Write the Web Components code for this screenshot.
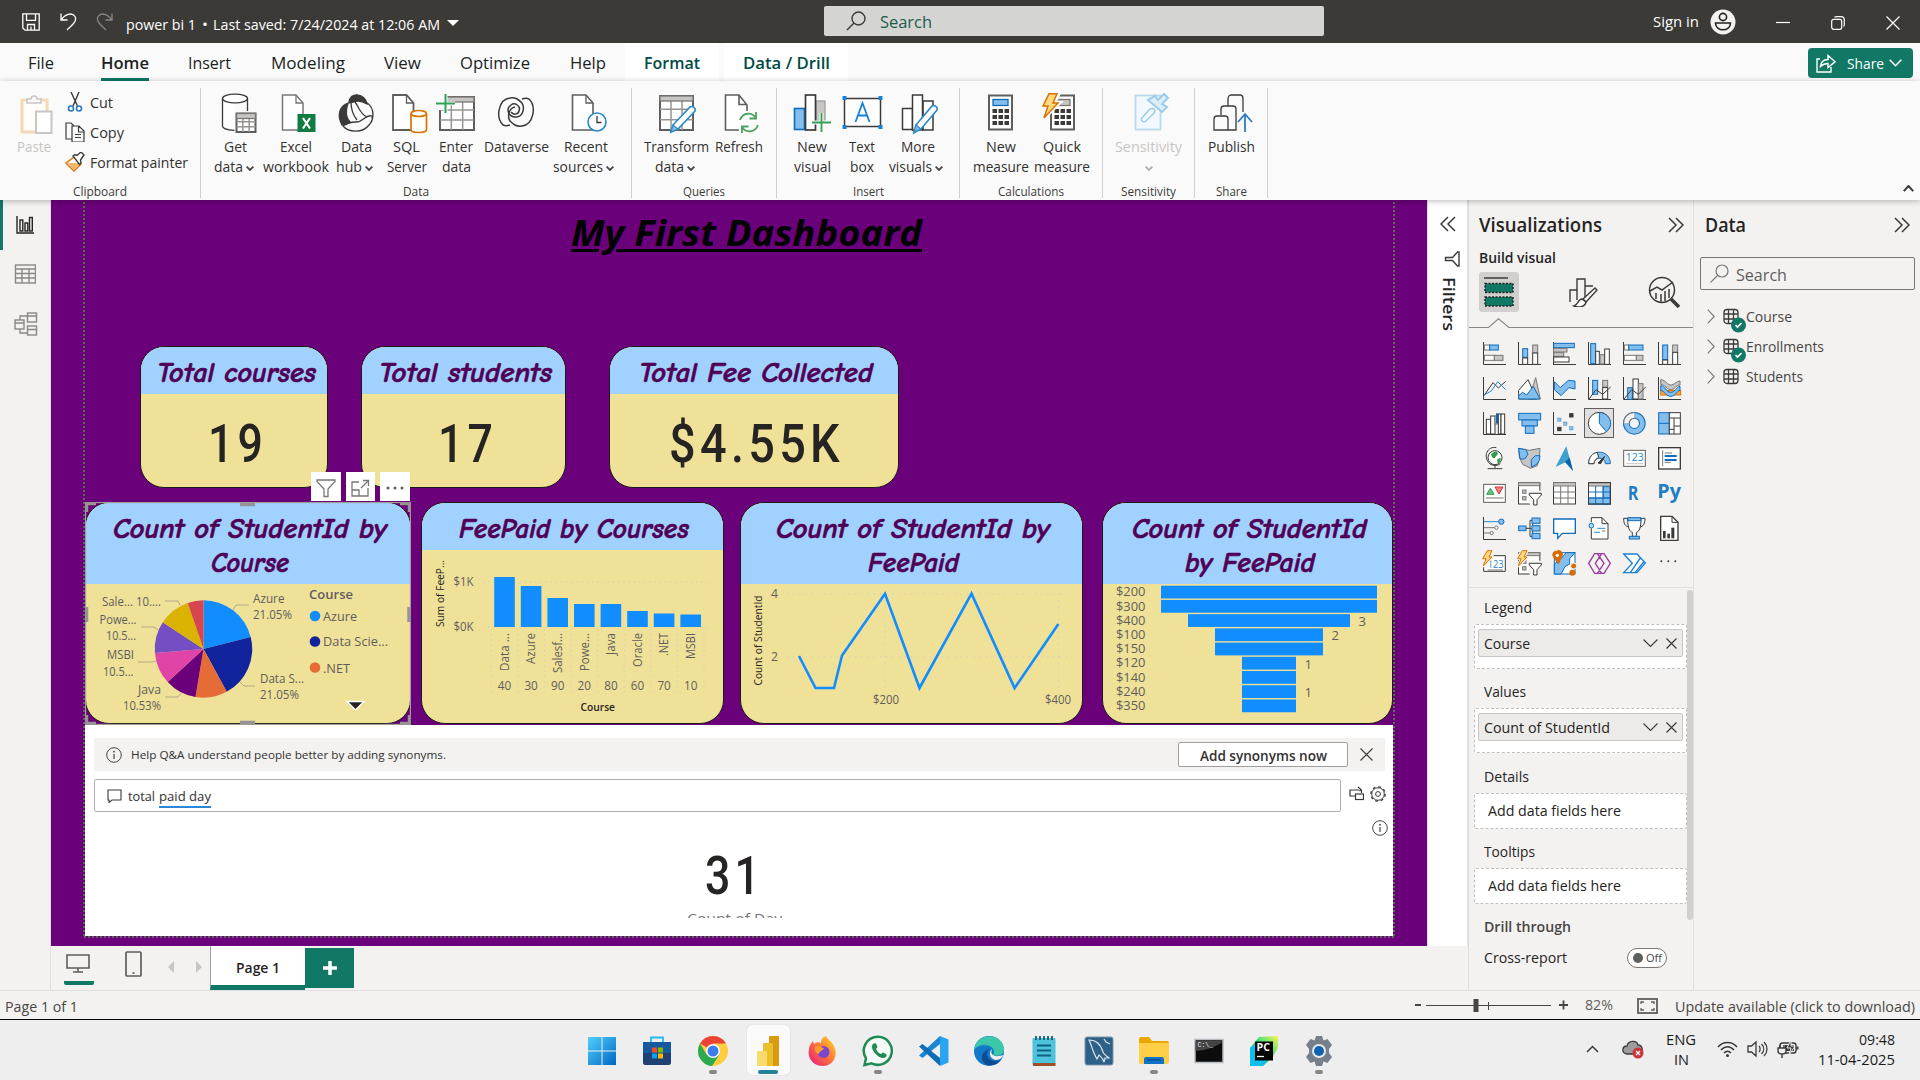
<!DOCTYPE html>
<html lang="en">
<head>
<meta charset="utf-8">
<title>power bi 1</title>
<style>
html,body{margin:0;padding:0}
body{width:1920px;height:1080px;overflow:hidden;display:flex;flex-direction:column;font-family:"Segoe UI","Open Sans","Noto Sans",sans-serif;font-size:14px;color:#252423;background:#f3f2f1}
main{display:flex;height:790px;flex:none}
.mid{display:flex;flex-direction:column;width:1417px}
.top{display:flex;height:746px}
</style>
</head>
<body>
<title-bar></title-bar>
<ribbon-tabs></ribbon-tabs>
<ribbon-bar></ribbon-bar>
<main>
  <nav-rail></nav-rail>
  <div class="mid">
    <div class="top"><report-canvas></report-canvas><filters-pane></filters-pane></div>
    <page-tabs></page-tabs>
  </div>
  <viz-pane></viz-pane>
  <data-pane></data-pane>
</main>
<status-bar></status-bar>
<task-bar></task-bar>
<script>
const K='#3b3a39',B='#0f6cbd',L='#83beec',G='#797775',H='#c8c6c4',W='#fff';
const r=(x,y,w,h,f='none',s=K,sw)=>`<rect x="${x}" y="${y}" width="${w}" height="${h}" fill="${f}" stroke="${s}"${sw?` stroke-width="${sw}"`:''}/>`;
const p=(d,s=K,f='none',sw)=>`<path d="${d}" fill="${f}" stroke="${s}"${sw?` stroke-width="${sw}"`:''}/>`;
const c=(x,y,q,f='none',s=K,sw)=>`<circle cx="${x}" cy="${y}" r="${q}" fill="${f}" stroke="${s}"${sw?` stroke-width="${sw}"`:''}/>`;
const svg=(w,h,vb,body,sw=1.3,st='')=>`<svg width="${w}" height="${h}" viewBox="${vb}" fill="none" stroke-width="${sw}" style="display:block;flex:none;${st}">${body}</svg>`;
const t=(s,w,st='')=>`<fit-text w="${w}" style="${st}">${s}</fit-text>`;
const define=(name,css,html)=>customElements.define(name,class extends HTMLElement{
  connectedCallback(){ if(this.shadowRoot) return;
    const root=this.attachShadow({mode:'open'});
    root.innerHTML=`<style>*{box-sizing:border-box}:host{display:block;box-sizing:border-box;flex:none}${css}</style>`+(typeof html==='function'?html(this):html);
  }});
const a=(e,n,d='')=>e.getAttribute(n)??d;

/* text set to a fixed measure */
const fits=new Set();
customElements.define('fit-text',class extends HTMLElement{
  connectedCallback(){
    if(!this.shadowRoot){
      this.attachShadow({mode:'open'}).innerHTML=`<style>:host{display:block;flex:none;white-space:nowrap}span{display:inline-block;transform-origin:0 50%}</style><span><slot></slot></span>`;
      fits.add(this);
    }
    this.fit();
  }
  fit(){
    const w=+this.getAttribute('w'),s=this.shadowRoot.querySelector('span');
    this.style.width=w+'px';
    s.style.transform='';
    if(s.offsetWidth)s.style.transform=`scaleX(${w/s.getBoundingClientRect().width})`;
  }
});

/* ---------- title bar ---------- */
define('title-bar',`:host{height:43px;background:#3b3a37;color:#fff;display:flex;align-items:center}
.q{margin-left:365px;width:500px;height:30px;background:#d4d4d2;border-radius:2px;display:flex;align-items:center;color:#1e5c4f;padding-left:22px;margin-top:-1px}`,
svg(18,18,'0 0 18 18',p('M.8.8h16.4v16.4H3L.8 15zM4.5.8v6.5h9V.8M5.5 17v-5.5h7V17M9 13.5V17','#fff'),1.3,'margin-left:22px')+
svg(17,19,'0 0 17 19',p('M1 1.500v6.500h6.500M1.300 7.800C5 2 12 0 15 4.500 17.500 9 12 13 7 18','#fff'),1.3,'margin-left:20px')+
svg(17,19,'0 0 17 19',p('M16 1.500v6.500H9.500M15.700 7.800C12 2 5 0 2 4.500-.5 9 5 13 10 18','#8a8886'),1.3,'margin-left:19px')+
t('power bi 1',70,'margin-left:13px;margin-top:6px;font-size:14.500px')+t('•',6,'margin-left:5.500px;margin-top:6px;font-size:14.500px')+
t('Last saved: 7/24/2024 at 12:06 AM',227,'margin-left:5.500px;margin-top:6px;font-size:14.500px')+
svg(12,6,'0 0 12 6',p('M0 0h12L6 6z','none','#fff'),1,'margin-left:7px;margin-top:2px')+
`<div class="q">${svg(20,20,'0 0 20 20',c(12.5,7.5,6.5)+p('M8 12L1 19'),1.4)}${t('Search',52,'margin-left:14px;font-size:16.500px')}</div>`+
t('Sign in',46,'margin-left:329px;font-size:14.500px;margin-top:-1px')+
svg(26,26,'0 0 26 26',c(13,13,12.5,'#f3f2f1','none')+c(13,8,3.6,'none','#222',1.6)+p('M5.500 14h15c0 9-15 9-15 0z','#222','none',1.6),1,'margin-left:11px')+
svg(14,14,'0 0 14 14',p('M0 7.500h14','#fff'),1.2,'margin-left:40px')+
svg(14,14,'0 0 14 14',`<rect x=".7" y="3.300" width="10" height="10" rx="2" stroke="#fff"/><path d="M3.500 1.200C4 .8 5 .7 6 .7h4c2 0 3.300 1.300 3.300 3.300v4c0 1-.2 2-.7 2.500" stroke="#fff"/>`,1.2,'margin-left:41px;margin-top:3px')+
svg(14,14,'0 0 14 14',p('M.5.5l13 13M13.500.5l-13 13','#fff'),1.2,'margin-left:41px;margin-top:3px'));

/* ---------- ribbon ---------- */
define('ribbon-tabs',`:host{height:38px;background:#fafafa;display:flex;align-items:stretch;font-size:16px;color:#201f1e;line-height:40px}
.on{font-weight:600;border-bottom:3px solid #117865;line-height:40px;height:38px}
.ctx{background:#fff;font-weight:600;color:#004b45;display:flex;justify-content:center}
.share{margin:5px 7px 3px 960px;width:105px;height:30px;background:#117865;border-radius:4px;color:#fff;display:flex;align-items:center;line-height:28px}`,
t('File',26,'margin-left:28px')+`<div class="on" style="margin-left:47px">${t('Home',48)}</div>`+t('Insert',43,'margin-left:39px')+t('Modeling',74,'margin-left:40px')+t('View',37,'margin-left:39px')+t('Optimize',70,'margin-left:39px')+t('Help',36,'margin-left:40px')+
`<div class="ctx" style="width:94px;margin-left:19px">${t('Format',56)}</div><div class="ctx" style="width:124px;margin-left:5px">${t('Data / Drill',87)}</div>
<div class="share">${svg(20,19,'0 0 20 19',p('M4 5H1v13h14v-5M4.500 12.500C5 7.500 8 5.500 12 5.500V1.500l7 6.300-7 5.700V9.500c-3.500 0-5.500 1-7.500 3z','#fff'),1.4,'margin-left:8px')}${t('Share',37,'margin-left:11px;font-size:15px')}${svg(13,8,'0 0 13 8',p('M.7.7l5.800 6 5.800-6','#fff'),1.6,'margin-left:5px')}</div>`);

const doc='M3.500 1H17l7 8v27H3.500z',fold='M17 1v8h7';
const gridI=(x,y,w,h)=>r(x,y,w,h,W,'#605e5c',2)+p(`M${x} ${y+h/3+2}h${w}M${x} ${y+h*2/3+1}h${w}M${x+w/3} ${y+5}v${h-5}M${x+w*2/3} ${y+5}v${h-5}`,'#979593','none',1.5)+r(x,y,w,5,H,'#797775',1.3);
const sh=(x,y,b)=>`<g transform="translate(${x} ${y})">${b}</g>`;
const RI={
paste:sh(5,2,p('M3 5h25v32H3z','#f3d9b5','#fffdf8',3)+p('M8 8V4h4c0-4 6-4 6 0h4v4z','#c8c6c4','#fafafa',1.6)+r(17,16.500,15.500,21.500,'#fff','#c8c6c4',2)),
get:p('M6 5v27c0 3 6 5 13 5V5','none',W)+`<ellipse cx="19" cy="5.500" rx="12.500" ry="4.300" fill="#fff" stroke="${K}"/>`+p('M6.500 5.500V33c0 2 4 4 12 4.300M31.500 5.500V18')+gridI(20.5,20.500,19,18.500),
excel:sh(3,1,p(doc,'#797775','#fff',1.5)+p(fold,'#797775')+r(18.5,20,18,18,'#107c41','none')+p('M24 24l7 10.500M31 24l-7 10.500','#fff','none',2.200)),
hub:sh(0,1,p('M13 9C13 3 18 0 22 1c5 1 8 4 9 9-5-3-9-4-13-2z',K,K)+p('M12 9C3 12 1 22 6 31c4-1 7-1 8-3-4-4-5-10-2-19z',K,K)+p('M18 7c6-3 19 1 19 14 0 3-.5 5-2 7M7 32c6 7 20 7 26-1 3-3 4-6 3-9-7-2-8 6-16 6-5 0-9 1-13 4zM15 8c0 7 2 13 6 18M19 8c4 5 5 12 12 15')),
sql:sh(2.5,1,p(doc,'#605e5c','#fff',1.8)+p(fold,'#605e5c')+p('M21.500 19.500v16c0 4 15.500 4 15.500 0v-16','#d97300','#fff',1.7)+`<ellipse cx="29.250" cy="19.500" rx="7.750" ry="3" fill="#fff" stroke="#d97300" stroke-width="1.700"/>`),
enter:sh(1,1,gridI(3,3,34,33)+r(0,0,9,16,'#fafafa','none')+p('M8.500 0v19M-1 9.500h19','#fafafa','none',4)+p('M8.500 0v19M-1 9.500h19','#31a354','none',2)),
verse:p('M7 32C-1 24 3 6 14 5c6-1 9 2 12 5 3 5 1 13-5 14-8 1-12-8-6-12 4-3 10 1 8 6-1 4-6 4-8 1M33 6c8 8 4 26-7 27-6 1-9-2-12-5-3-5-1-13 5-14M26 6c3-1 5-1 7 0M14 32c-3 1-5 1-7 0',K,'none',1.500),
recent:sh(3,1,p(doc,'#605e5c','#fff',1.6)+p(fold,'#605e5c')+c(28,28,9,'#fff','#2b88c8',1.6)+p('M28 22v6.500h4.500')),
transform:sh(1,0,gridI(2,3,33,34)+p('M15 32l17-18c3-1.500 6 1 5 4L20 36l-7 3z','#2b88c8','#fff',1.600)+p('M15 32l5 4-7 3z','#2b88c8',L,1.2)),
refresh:sh(1,1,p('M5.500 1H19l8 9v27H5.500z','none','#fff')+p('M19 36H5.500V1H19l8 10v6M19 1v9.500h8','#605e5c','none',1.6)+p('M20 26c3-8 12-8 16-2M36 18v6.500h-6.500M38 31c-3 8-12 8-16 2M22 39v-6.500h6.500','#4da061','none',1.8)),
newv:r(2.5,15.500,10,21,L,B,1.6)+r(24,8,9,20,H,'#a19f9d')+r(13.500,2,10,35,'#fff',K,1.7)+p('M29.500 20v19M20 29.500h19','#fafafa','none',4)+p('M29.500 20v19M20 29.500h19','#31a354','none',1.800),
textb:r(2.5,5.500,36,28,'#fff',K,1.5)+[[2.5,5],[38.5,5],[2.5,34],[38.5,34]].map(q=>r(q[0]-2,q[1]-2,4,4,'#1782d4','none')).join('')+p('M13.500 29l7-19 7 19M16 22.500h9','#1782d4','none',1.800),
more:sh(1,0,r(3.5,15.500,10,21,'#fff',K,1.5)+r(24,8,10,29,'#fff',K,1.5)+r(13.5,2,10,35,'#fff',K,1.5)+p('M17 32l16-19c3-1.500 6 1 5 4L22 36l-7 4z','#2b88c8','#fff',1.600)+p('M17 32l5 4-7 3z','#2b88c8',L,1.2)),
calc:r(8,2.500,23,34,'#fff','#605e5c',2)+r(12,6.500,15,6,L,B)+[16,22,28].map(y=>[11.5,17.5,23.500].map(x=>r(x,y,4.5,4,K,'none')).join('')).join(''),
quick:sh(-1,0,r(10,2.500,23,34,'#fff','#605e5c',2)+r(16,6.500,13,6,H,G)+[16,22,28].map(y=>[13.5,19.500,25.500].map(x=>r(x,y,4.5,4,K,'none')).join('')).join('')+p('M7 0h11l-5 10h5L2 26l4-12H1z','#fafafa','#fafafa',4)+p('M8 .7h8L12 10h5L3 25l4-12H2z','#d97300','#ffd780',1.5)),
sens:sh(1,0,r(5.5,2.500,25,34,'#f2f8fd','#b9d9ee',1.8)+p('M11 26l9-10c4-2 6 2 4 4l-8 8c-3 2-6-1-4-3l6-7','#9ccbea','none',1.5)+p('M18 7l14 12 5-5-5-3 6-6-4-4-6 6-3-4z','#9ccbea','#dceefa',2)),
publish:sh(1,1,p('M2 36V25c0-2 1-3 3-3h8c2 0 3 1 3 3v11zM9 21v-6c0-2 1-3 3-3h9c2 0 3 1 3 3v21H16M16 12V5c0-2 1-4 3-4h9c2 0 3 1 3 4v13')+p('M33 38V20M26 28l7-8 7 8','#2b7cc0','none',1.800)),
};
define('ribbon-button',`:host{display:flex;flex-direction:column;align-items:center;width:var(--w);font-size:14px;line-height:20px;color:#323130}
.l{display:flex;align-items:center;height:20px;gap:3px}.m{margin-left:-4px}.i{height:44px;width:40px}:host([off]){color:#c8c6c4}`,
e=>{const[l1,w1,l2,w2]=a(e,'lines').split('|');const ch=svg(8,5,'0 0 8 5',p('M.6.6L4 4 7.400.6',e.hasAttribute('off')?'#b3b0ad':'#484644'),1.8,'margin-top:3px');
 return `<div class="i">${svg(40,40,'0 0 40 40',RI[a(e,'icon')],1.3,'overflow:visible')}</div><div class="l">${t(l1,w1)}</div><div class="l ${l2&&e.hasAttribute('menu')?'m':''}">${l2?t(l2,w2):''}${e.hasAttribute('menu')?ch:''}</div>`});
define('ribbon-group',`:host{display:flex;flex-direction:column;height:110px;margin-top:7px;border-right:1px solid #d2d0ce;width:var(--w)}
.b{display:flex;height:93px;padding:5px 0 0 var(--p)}.c{display:flex;justify-content:center;font-size:12px;line-height:20px;color:#3b3a39;height:16px;padding-top:1px}`,
e=>`<div class="b"><slot></slot></div><div class="c">${t(a(e,'label'),a(e,'lw'))}</div>`);
const rb=(i,w,l,x='')=>`<ribbon-button icon="${i}" lines="${l}" style="--w:${w}px" ${x}></ribbon-button>`;
const rg=(l,lw,w,pd,x)=>`<ribbon-group label="${l}" lw="${lw}" style="--w:${w}px;--p:${pd}px">${x}</ribbon-group>`;
define('ribbon-bar',`:host{height:119px;background:#fafafa;display:flex;box-shadow:0 1px 6px rgba(0,0,0,.28);position:relative;z-index:2}
.cl{display:flex;flex-direction:column;gap:10px;margin-left:10px;font-size:14px;color:#323130;margin-top:-1px}.cl div{display:flex;height:20px;align-items:center;gap:5px}
.up{margin:104px 0 0 635px}`,
rg('Clipboard',54,201,14,rb('paste',40,'Paste|34','off')+`<div class="cl">
<div>${svg(20,20,'0 0 20 20',p('M6 0l6.500 14M14 0L8 14')+c(6,16.500,2.500,'none','#2b7cc0',1.6)+c(14,16.500,2.500,'none','#2b7cc0',1.6),1.4,'margin-left:1px')}${t('Cut',23)}</div>
<div>${svg(20,20,'0 0 20 20',p('M7 17H1V1h5l3 3')+p('M7 4h7l5 5v11H7zM13.500 4.500V10H19M10 12.500h6M10 15.500h6'),1.2,'margin-left:1px')}${t('Copy',34)}</div>
<div>${svg(20,20,'0 0 20 20',p('M9 5l7 7-7 7L1 11z','#e08020','#fff',1.6)+p('M3 11h12l-6 7z','none','#f5b668')+p('M8 4l2-1.500 2 1 4-3.500 3 3-3.500 5 .5 3-1.500 1.500z',K,'#fff'),1.4,'margin-left:1px')}${t('Format painter',98)}</div></div>`)+
rg('Data',26,431,7,rb('get',55,'Get|23|data|29','menu')+rb('excel',66,'Excel|32|workbook|66')+rb('hub',54,'Data|31|hub|26','menu')+rb('sql',47,'SQL|27|Server|40')+rb('enter',52,'Enter|34|data|29')+rb('verse',68,'Dataverse|65')+rb('recent',71,'Recent|44|sources|50','menu'))+
rg('Queries',42,145,10,rb('transform',69,'Transform|65|data|29','menu')+rb('refresh',56,'Refresh|48'))+
rg('Insert',31,183,13,rb('newv',44,'New|30|visual|37')+rb('textb',56,'Text|26|box|24')+rb('more',56,'More|34|visuals|43','menu'))+
rg('Calculations',66,143,12,rb('calc',58,'New|30|measure|56')+rb('quick',64,'Quick|38|measure|56'))+
rg('Sensitivity',55,92,11,rb('sens',69,'Sensitivity|67','off menu'))+
rg('Share',31,73,12,rb('publish',48,'Publish|47'))+
`<div class="up">${svg(11,7,'0 0 11 7',p('M.8 6.200L5.500 1l4.700 5.200'),2)}</div>`);

/* ---------- left rail ---------- */
define('nav-rail',`:host{width:51px;height:790px;background:#f3f2f1;border-right:1px solid #e1dfdd}
div{height:50px;display:flex;align-items:center;padding-left:14px}.on{border-left:3px solid #117865;padding-left:13px}`,
`<div class="on">${svg(18,18,'0 0 18 18',p('M1 0v17h17','#252423')+r(4,4,2.800,11,'none','#252423')+r(9,7,2.800,8,'none','#252423')+r(13.500,1.500,2.800,13.500,'none','#252423'),1.4)}</div>
<div style="margin-top:-1px">${svg(22,20,'0 0 22 20',r(1.5,1,20,18,'none','#8a8886')+p('M1.500 5h20M1.500 9.500h20M1.500 14h20M8 5v14M15 5v14','#8a8886'),1.4)}</div>
<div style="margin-top:0">${svg(24,24,'0 0 24 24',r(1,8,9,9,'none','#8a8886')+r(13.500,1,9,9,'none','#8a8886')+r(13.500,14,9,9,'none','#8a8886')+p('M1 11h9M13.500 4h9M13.500 17.500h9M6 8V4h7M6 17v4h7','#8a8886'),1.4)}</div>`);

/* ---------- report canvas ---------- */
const T=(x,y,s,w,z,o='')=>`<text x="${x}" y="${y+z*.357}" font-size="${z}" textLength="${w}" lengthAdjust="spacingAndGlyphs" ${o}>${s}</text>`;
const V=(x,y,s,w,z,o='')=>`<text transform="translate(${x+z*.357} ${y}) rotate(-90)" font-size="${z}" textLength="${w}" lengthAdjust="spacingAndGlyphs" ${o}>${s}</text>`;
define('visual-card',`:host{position:absolute;left:var(--x);top:var(--y);width:var(--w);height:var(--h);border:1px solid #1b1a19;border-radius:24px;background:#f0e199;overflow:hidden;display:flex;flex-direction:column}
header{background:#a0d1ff;height:var(--hh);flex:none;display:flex;flex-direction:column;align-items:center;padding-top:8.500px;font:italic 700 28px/34px "Comic Sans MS","Comic Neue","Open Sans",sans-serif;color:#500055;-webkit-text-stroke:.6px #500055}
.b{flex:1;min-height:0;font-family:"Segoe UI","Open Sans",sans-serif}`,
e=>`<header>${a(e,'heading').split(';').map(s=>{const[x,w]=s.split('|');return t(x,w,'height:34px;margin-left:'+a(e,'dx','4')+'px')}).join('')}</header><div class="b"><slot></slot></div>`);
define('big-number',`:host{display:flex;justify-content:center;font:500 54px/54px Roboto,sans-serif;letter-spacing:5px;color:#252423}`,e=>t(a(e,'value'),a(e,'w')));
const card=(x,y,w,h,hh,head,body,dx=4)=>`<visual-card style="--x:${x}px;--y:${y}px;--w:${w}px;--h:${h}px;--hh:${hh}px" heading="${head}" dx="${dx}">${body}</visual-card>`;
const chart=(x,y,w,h,body)=>svg(w,h,`${x} ${y} ${w} ${h}`,body,1,'fill:#605e5c');

const pie=()=>{const cx=203.5,cy=649,R=48.7,v=[4,4,2,2,2,2,2,1],col=['#118dff','#12239e','#e66c37','#6b007b','#e044a7','#744ec2','#d9b300','#d64550'];let s=0,o='';
 v.forEach((n,i)=>{const q=k=>{const g=k/19*2*Math.PI;return (cx+R*Math.sin(g)).toFixed(2)+' '+(cy-R*Math.cos(g)).toFixed(2)};
  o+=`<path d="M${cx} ${cy}L${q(s)}A${R} ${R} 0 0 1 ${q(s+n)}Z" fill="${col[i]}"/>`;s+=n});return o};
const lead=d=>`<path d="${d}" stroke="#b3a98a" fill="none"/>`;
const pieChart=chart(86,584,323,139,pie()+
 lead('M165 601h13l2 4M141 627h13l4 3M138 662h14l4-1M165 697h13l3-4M249 605h-13l-3 5M255 686h-11l-4-4')+
 T(102,602,'Sale... 10....',59,12)+T(99.500,620,'Powe...',37,12)+T(106,636,'10.5...',30,12)+T(107,655,'MSBI',27,12)+T(103,671.500,'10.5...',30.500,12)+T(138,690,'Java',23,12)+T(123,706,'10.53%',38,12)+
 T(253,599,'Azure',31.500,12)+T(253,615,'21.05%',39,12)+T(260,679,'Data S...',44,12)+T(260,695,'21.05%',39,12)+
 T(309,594.500,'Course',44,13.200,'font-weight="600"')+c(315,616,5.300,'#118dff','none')+c(315,641.500,5.300,'#12239e','none')+c(315,667.500,5.300,'#e66c37','none')+
 T(323,616.500,'Azure',34,13.500)+T(323,641.500,'Data Scie...',65,13.500)+T(323,668,'.NET',27,13.500)+
 '<path d="M347 701.500h17l-8.500 8.500z" fill="#252423" stroke="#fff" stroke-width="1.500"/>');

const bars=()=>{const top=[577,586,598,604,604,611,613.5,614.5],lb=[['Data ...',38],['Azure',31],['Salesf...',40],['Powe...',38],['Java',22],['Oracle',34],['.NET',23],['MSBI',26]],n=[40,30,90,20,80,60,70,10];
 let o='<g stroke="#cdc9c4" stroke-dasharray="1.200 4"><path d="M483 582h229M483 627h229"/>';
 for(let i=0;i<9;i++)o+=`<path d="M${491.200+26.600*i} 629v68"/>`;o+='</g>';
 top.forEach((y,i)=>{const x=504.500+26.600*i;o+=`<rect x="${x-10.300}" y="${y}" width="20.600" height="${627-y}" fill="#118dff"/>`+V(x,633+lb[i][1],lb[i][0],lb[i][1],12)+T(x-6.700,685.500,n[i],13.400,12)});
 return o+V(440.500,627,'Sum of FeeP...',67,10.500,'fill="#252423" font-weight="500"')+T(453.500,582,'$1K',20,12)+T(453.500,627,'$0K',20,12)+T(580.500,707,'Course',34.500,10.800,'fill="#252423" font-weight="600"')};
const barChart=chart(422,550,301,173,bars());

const lineChart=chart(741,584,341,139,'<path d="M787 594h282M787 657h282M885 594v94M1058.500 594v94" stroke="#cdc9c4" stroke-dasharray="1.200 5"/><path d="M799 656L815.500 688H834L842 655.500 885 593.700 919.500 688 971.500 593.700 1014.600 688 1058.400 624" fill="none" stroke="#118dff" stroke-width="2.600"/>'+
 V(758.500,685.500,'Count of StudentId',90,10.500,'fill="#252423" font-weight="500"')+T(771,594,'4',7,12)+T(771,657,'2',7,12)+T(873,699.500,'$200',26,12)+T(1045,699.500,'$400',26,12));

const funnel=()=>{let o='';[[4,'$200'],[4,'$300'],[3,'$400',3],[2,'$100',2],[2,'$150'],[1,'$120',1],[1,'$140'],[1,'$240',1],[1,'$350']].forEach((q,i)=>{const w=q[0]*54,y=585.700+14.220*i;
 o+=`<rect x="${1269-w/2}" y="${y}" width="${w}" height="12.800" fill="#118dff"/>`+T(1116,y+5.800,q[1],29.500,13.500)+(q[2]?T(1269+w/2+8.500,y+7,q[2],7.500,13.500):'')});return o};
const funnelChart=chart(1103,584,289,139,funnel());

define('visual-actions',`:host{position:absolute;left:311px;top:472px;display:flex;gap:5px}div{width:29.500px;height:29px;background:#fff;display:flex;align-items:center;justify-content:center}`,
`<div>${svg(20,20,'0 0 20 20',p('M1 2h18v1.500L12 11v7.500H8V11L1 3.500z',G),1.3,'margin-top:2px')}</div><div>${svg(19,18,'0 0 19 18',p('M8 3H1v14h16V9M1 11h7v6M10 9l7-7M12 1.500h5.500V7',G),1.3,'margin-top:3px')}</div><div>${svg(18,4,'0 0 18 4',c(2,2,1.500,'#605e5c','none')+c(9,2,1.500,'#605e5c','none')+c(16,2,1.500,'#605e5c','none'),1,'margin-top:2px')}</div>`);
define('selection-frame',`:host{position:absolute;left:85px;top:502px}`,
svg(326,223,'0 0 326 223',r(.5,.5,325,222,'none','#a19f9d')+p('M1.500 10V1.500H11M315 1.500h9.500V10M1.500 213v8.500H11M315 221.500h9.500V213M155 2.500h15M155 220.500h15M1.500 105v15M324 105v15','#979593','none',3.500)));

const info=(z,col='#484644')=>svg(z,z,'0 0 16 16',c(8,8,7.300,'none',col,1)+p('M8 7v5',col,'none',1.200)+c(8,4.700,.9,col,'none'));
define('qa-visual',`:host{position:absolute;left:85px;top:725px;width:1308px;height:211px;background:#fff;padding:13px 6px 0 9px;color:#323130}
.tip{background:#f3f2f1;height:33px;width:1291px;display:flex;align-items:center;padding-left:12px;font-size:11.500px}
button{margin-left:732px;width:170px;height:25px;border:1px solid #a19f9d;border-radius:2px;background:#fff;padding:2px 0 0;display:flex;justify-content:center;align-items:center;font:600 13.500px "Segoe UI","Open Sans",sans-serif;color:#323130;margin-top:0}
.row{display:flex;margin-top:8px;gap:8px}.in{width:1247px;height:33px;border:1px solid #b3b0ad;border-radius:2px;display:flex;align-items:center;padding-left:12px;font-size:13.500px;line-height:20px}
u{text-decoration:none;border-bottom:2px solid #2b88d8;height:22px}
.i{display:flex;justify-content:flex-end;height:16px;margin:8px -1px 0 0}.n{display:flex;justify-content:center;height:54px;margin:13px 12px 0 0}.cap{height:7px;overflow:hidden;display:flex;justify-content:center;margin:8px 12px 0 0;font-size:14.500px;line-height:20px;color:#797775}.cap>*{margin-top:-2px}`,
`<div class="tip">${info(16)}${t('Help Q&amp;A understand people better by adding synonyms.',315,'margin-left:9px')}<button>${t('Add synonyms now',127)}</button>${svg(13,13,'0 0 13 13',p('M.5.5l12 12M12.500.5l-12 12'),1.100,'margin-left:12px')}</div>
<div class="row"><div class="in">${svg(15,14,'0 0 15 14',p('M1 1h13v10H5l-3 2.500V11H1z'),1.100)}${t('total',27,'margin-left:6px')}<u style="margin:2px 0 0 4px">${t('paid day',52)}</u></div>
<div style="display:flex;gap:6px;margin-top:7px">${svg(15,15,'0 0 15 15',p('M6 10H1V4h9M9 1l3 2.500L10.500 5M12.500 4v3')+r(6.500,8,8,5.500),1.200)}${svg(16,16,'0 0 16 16',c(8,8,6.300,'none',K,1)+`<circle cx="8" cy="8" r="7.200" stroke="${K}" stroke-dasharray="2.800 2.850" stroke-width="1.300"/>`+c(8,8,2.400,'none',K,1))}</div></div>
<div class="i">${info(16)}</div><div class="n"><big-number value="31" w="59"></big-number></div><div class="cap">${t('Count of Day',95)}</div>`);

define('report-canvas',`:host{width:1376px;height:746px;background:#6b007b;position:relative;overflow:hidden}
.o{position:absolute;left:-51px;top:-200px;width:1471px;height:946px}
h1{position:absolute;left:571px;top:207px;margin:0;font:italic 700 36.500px/50px "Segoe UI","Open Sans",sans-serif;color:#000}`,
`<div class="o">${svg(1313,748,'83 190 1313 748',p('M84 190V936.800M84 937H1394M1394 190V937','#5d6b58','none',2).replace('<path','<path stroke-dasharray="2 2"'),2,'position:absolute;left:83px;top:190px')}
<h1>${t('<span style="text-decoration:underline;text-decoration-thickness:3px;text-underline-offset:3px">My First Dashboard</span>',351)}</h1>
${card(140,346,188,142,47,'Total courses|159','<big-number style="margin-top:23px;margin-left:7px" value="19" w="59"></big-number>',5)}
${card(361,346,205,142,47,'Total students|173','<big-number style="margin-top:23px;margin-left:8px" value="17" w="59"></big-number>')}
${card(609,346,290,142,47,'Total Fee Collected|234','<big-number style="margin-top:23px;margin-left:5px" value="$4.55K" w="175"></big-number>',4)}
${card(85,502,326,222,81,'Count of StudentId by|274;Course|78',pieChart,3)}
${card(421,502,303,222,47,'FeePaid by Courses|230',barChart,3)}
${card(740,502,343,222,81,'Count of StudentId by|274;FeePaid|91',lineChart,3)}
${card(1102,502,291,222,81,'Count of StudentId|235;by FeePaid|130',funnelChart,4)}
<selection-frame></selection-frame><visual-actions></visual-actions><qa-visual></qa-visual></div>`);

/* ---------- panes ---------- */
const dbl=(d)=>svg(16,16,'0 0 16 16',p(d>0?'M1 1l7 7-7 7M8 1l7 7-7 7':'M8 1L1 8l7 7M15 1L8 8l7 7'),1.5);
define('filters-pane',`:host{width:41px;height:746px;background:#fff;border-left:1px solid #e1dfdd;border-right:1px solid #e1dfdd;padding:16px 0 0 12px}`,
dbl(-1)+svg(16,16,'0 0 16 16',p('M15 1v14h-1.500L8.500 9.500H1.500v-3h7L13.500 1z'),1.400,'margin:19px 0 0 4px')+
svg(20,60,'0 0 20 60',`<text transform="translate(3 1) rotate(90)" font-size="17" font-weight="600" fill="#252423" textLength="54" lengthAdjust="spacingAndGlyphs">Filters</text>`,1,'margin:9px 0 0 0;overflow:visible'));

const ax=p('M1.500 0V67.500H69'),vt=(x,y,s,z,f,w,o='')=>`<text x="${x}" y="${y}" font-size="${z}" fill="${f}" textLength="${w}" lengthAdjust="spacingAndGlyphs" ${o}>${s}</text>`;
const bolt=p('M12-4h16L18 16h10L0 44 8 20H-2z','#f3f2f1','#f3f2f1',8)+p('M13-4h14L18 15h9L1 42 9 20H-1z','#d97300','#ffd780',3);
const slic=r(1.5,2,64,64,'#fff',K)+r(1.5,2,64,9,H,G)+r(14,24,10,10,H,G)+r(14,44,10,10,H,G)+p('M28 26h45v46H36z','none','#f3f2f1')+p('M34 34h36v5L57 53v16H47V53L34 39z',K,'#fff');
const VI=[
ax+r(4,9,16,15,W,G)+r(20,9,26,15,L,B)+r(4,40,30,15,W,G)+r(34,40,26,15,H,G),
ax+r(14,20,15,26,L,B)+r(14,48,15,19,W,K)+r(44,9,15,24,H,G)+r(44,33,15,34,W,K),
p('M1.500 0V69M0 67.500h69')+r(2,4,62,13,L,B)+r(2,19,40,11,H,G)+r(2,32,30,11,H,G)+r(2,45,46,15,W),
ax+r(8,5,15,60,L,B)+r(23,28,11,39,W)+r(36,38,14,28,H,G)+r(50,21,14,46,W),
ax+r(4,9,13,15,W,G)+r(17,9,43,15,L,B)+r(4,40,36,15,W,G)+r(40,40,20,15,H,G),
ax+r(14,9,15,44,L,B)+r(14,54,15,13,W)+r(44,9,15,22,H,G)+r(44,31,15,36,W),
ax+p('M3 56L30 17l16 16L68 13')+p('M3 54l22-12L44 14l24 24','#2b88d8'),
p('M32 66L53 2l14 64z',G,H)+p('M2 66V40L30 8l26 58z',K,W)+p('M2 66V56l12-10 12 8 20-26 20 38z',B,L),
ax+p('M4 14l18 18L46 10l20 2v24L48 32 24 56 4 38z',B,L),
ax+r(14,10,15,42,L,B)+r(44,10,15,20,H,G)+r(44,32,15,34,W)+p('M3 66l21-28 20 14 24-22'),
ax+r(14,32,14,35,L,B)+r(30,6,16,60,W)+r(46,20,14,46,H,G)+p('M3 66l23-28 20 14 22-22'),
ax+p('M8 8c16 0 20 18 32 16s16-12 26-12v12c-12 0-14 12-26 14S20 22 8 22z',G,H)+r(8,40,60,14,'#f8a54a','#d97300')+p('M8 26c14 0 16 20 30 20s16-16 28-18v12c-10 2-14 18-28 18S20 42 8 40z',B,L),
ax+r(10,22,13,44,W)+r(23,12,13,54,W)+r(36,12,8,24,H,G)+p('M42 4v30',B,'none',6)+r(46,6,8,60,W)+r(54,6,11,60,W),
r(2,4,66,20,L,B)+r(12,24,46,18,L,B)+r(22,42,26,22,L,B),
ax+r(50,5,10,10,K)+r(14,18,10,10,L,B,1)+r(32,30,10,10,L,B,1)+r(14,46,10,10,K)+r(50,44,10,10,L,B,1),
c(34,34,33,W)+p('M34 2v32l21 25C80 40 66 2 34 2z',B,L),
c(34,34,24,'none','#0f6cbd',20)+c(34,34,24,'none',L,14)+p('M34 10A24 24 0 0 0 10 34',G,'none',20)+p('M34 10A24 24 0 0 0 10 34','#f3f2f1','none',14),
r(2,2,32,64,L,B)+p('M2 34h32',B)+r(34,2,33,64,W)+p('M34 18h33M48 18v48M48 42h19M34 52h14'),
c(36,32,21,W)+p('M24 22c6-10 18-10 20-4s-4 8-8 14-10-2-12-10zM42 38l10-6c4 6-2 16-8 16z','none','#2f9e4f')+p('M40 2C14-4-2 28 20 50c10 8 26 6 32 0M36 54v10M14 65h44','#3b3a39'),
p('M2 4l18 4 14 2 32-6-2 30-6 22-20 8L14 52 4 30z',G,H)+p('M2 4l22 4 6 14-10 14H6zM40 38l12-12h14l-2 14-8 12-16 8z',B,L),
p('M40-2L10 56 40 44z','none','#7ac4e8')+p('M40-2L8 60l32-16 20 28z','none','#3fa0d0')+p('M36 45l24 27L50 32z','none','#0a64a8'),
p('M2 50C2 4 67 4 67 50H52c0-22-34-22-34 0z',B,L)+p('M2 50C2 30 14 18 28 16l4 16c-8 2-14 10-14 18z',K,W)+p('M30 48l20-20-12 22z',K,K),
r(2,10,65,48,W,'#605e5c')+vt(8,43,'123','34','#2b88c8',54)+p('M10 50h50',H),
r(2,2,65,64,W,K,4)+p('M14 10v48M20 18h22M20 46h18',G)+p('M20 27h36M20 39h36',B,'none',6),
r(2,7,65,54,W,'#605e5c')+p('M11 37l11-18 11 18z','#2f9e4f','#6dc081')+p('M36 15h24L48 36z','#d13438','#f08080')+p('M8 48h54',G),
slic,
r(1.5,2,66,64,W)+r(1.500,2,66,10,H,G)+p('M2 30h66M2 48h66M23 12v54M45 12v54',G),
r(1.5,2,66,64,W)+r(46,14,20,52,L,B)+r(2,48,64,18,L,B)+r(1.500,2,66,10,H,G)+p('M2 30h66M2 48h66M23 12v54M45 12v54',B)+r(1.500,2,66,64),
vt(14,55,'R',60,'#1f7ec2',32,'font-weight="700"'),
vt(-2,49,'Py',60,'#1f7ec2',71,'font-weight="700"'),
ax+p('M3 14h44','#2b88d8')+c(55,14,8,L,B)+p('M3 32h32M3 48h20',G)+c(40,32,5,W,G)+c(26,48,5,W,G),
r(2,27,22,14,L,B)+p('M24 34h20M44 10v48M36 10V58M36 10h8M36 58h8')+r(42,3,24,16,L,B)+r(42,26,24,16,L,B)+r(42,49,24,16,L,B),
p('M2 6h65v43H28L14 64V49H2z',B,W,4),
p('M10 16V2h32l18 18v46H10V34M42 2v18h18',K,W)+c(10,26,7,'#b6dbf5',B)+p('M28 34h24M18 46h18','#2b88d8')+p('M42 42h10',G),
p('M14 4H2c0 16 4 24 16 26M54 4h12c0 16-4 24-16 26')+p('M14 4h40c0 30-6 40-14 42v12H28V46C20 44 14 34 14 4z',K,W)+r(15,2,38,9,L,B)+r(19,58,30,8,L,B),
p('M8-2h34l18 18v54H8z',K,W,4)+p('M42-2v18h18')+r(15,42,8,22,K,'none')+r(28,50,8,14,K,'none')+r(40,32,9,32,K,'none'),
p('M32 11h35v47H2V42',K,W)+vt(14,47,'123',32,'#2b88c8',48)+p('M14 54h46',G)+bolt,
slic+bolt,
r(4,2,62,64,'#fff',B)+p('M4 66V36l16-12L40 2h26L50 20v16L36 44 24 66z',B,L)+p('M10-2c8-6 20 0 18 12L16 36 0 12C-2 2 4-4 10-2z','#d96b00','#d96b00')+c(13,10,5,'#fff','none')+c(62,42,9,'#d96b00','#f3f2f1')+c(58,62,9,'#d96b00','none'),
p('M20 5h8l20 29-20 30h-8L2 34zM28 5h20l19 29-19 30H28M41 5L22 34l19 30','#9a3a9e','none',4),
p('M2 6h40l25 27-25 29H2l26-28zM22 62L52 18M36 62L62 30M2 6l26 28',"#1a7fd4",W,4),
c(10,28,3,K,'none')+c(31,28,3,K,'none')+c(52,28,3,K,'none')];

define('field-well',`:host{margin-left:5px;width:213px}.l{font-size:14.500px;line-height:20px;margin:0 0 0 10px;height:26px}
.w{border:1px dashed #c1bfbd;background:#fff;height:45px;padding:4px 3px;border-radius:2px}.w.e{height:36px;padding:0 0 0 13px;line-height:33px;font-size:14.500px}
.chip{height:28px;border:1px solid #c8c6c4;border-radius:2px;background:#edebe9;display:flex;align-items:center;padding:0 5px;font-size:14.500px}.g{flex:1}`,
e=>`<div class="l">${t(a(e,'label'),a(e,'lw'))}</div>`+(e.hasAttribute('chip')?`<div class="w"><div class="chip">${t(a(e,'chip'),a(e,'cw'))}<span class="g"></span>${svg(15,8,'0 0 15 8',p('M.5.5l7 7 7-7'),1.100)}${svg(11,11,'0 0 11 11',p('M.5.5l10 10M10.500.5l-10 10'),1.200,'margin-left:8px')}</div></div>`:`<div class="w e">${t('Add data fields here',133)}</div>`));
define('viz-pane',`:host{width:226px;height:790px;background:#f3f2f1;border-left:1px solid #e1dfdd;border-right:1px solid #e1dfdd;overflow:hidden}
.h{display:flex;padding:10px 9px 0 10px;height:48px;line-height:30px;font-size:19px;font-weight:600;justify-content:space-between}
.b{padding-left:10px;font-size:14.500px;font-weight:600;line-height:20px;height:24px}
.m{display:flex;padding-left:10px;height:46px}.tile{width:40px;height:40px;background:#d2d0ce;border-radius:3px;padding:4px}
.g{display:grid;grid-template-columns:repeat(6,35px);grid-auto-rows:35px;padding:8px 0 0 10px;height:257px}.g div{width:30px;height:30px;display:flex;align-items:center;justify-content:center;border:1px solid transparent}.g .s{border-color:#605e5c;background:#e1dfdd}
.f{height:404px;border-top:1px solid #e1dfdd;display:flex}.col{width:218px;padding-top:10px}.sb{width:7px;height:330px;background:#d2d0ce;border-radius:4px;margin-top:2px}
.x{display:flex;align-items:center;margin-left:15px;line-height:20px;font-size:14.500px}.tg{margin-left:60px;width:40px;height:20px;border:1px solid #797775;border-radius:10px;background:#fff;display:flex;align-items:center;padding-left:5px;font-size:10.500px;gap:3px;color:#484644}.tg i{width:10px;height:10px;border-radius:50%;background:#605e5c}`,
`<div class="h">${t('Visualizations',123)}<div style="padding-top:7px">${dbl(1)}</div></div><div class="b">${t('Build visual',77)}</div>
<div class="m"><div class="tile">${svg(32,32,'0 0 32 32',p('M1 2h24','#252423','none',1.3)+[7.5,21].map(y=>`<rect x="2" y="${y}" width="28" height="9" fill="#117865" stroke="#252423" stroke-width="1.500" stroke-dasharray="2 1.500"/>`).join(''))}</div>
${svg(30,30,'0 0 30 30',p('M2 25V13h7V2h8v20M17 9h8M9 13v10')+p('M27 11L15 22l3 3L29 13z',K,W)+p('M14 22c-4 0-4 6-8 7 5 2 11 1 12-4z',K,W),1.400,'margin:5px 0 0 49px')}
${svg(32,32,'0 0 32 32',c(14,14,12.500,'none',K,1.500)+p('M2 15l7-4 5 3 11-8M8 17v6M13 18v8M17 15v10M21 13v9',K,'none',1.500)+p('M23 23l8 8',K,'none',3.500),1.300,'margin:4px 0 0 50px')}</div>
${svg(225,12,'1 0 225 12',p('M0 9.500h20.500L30.500 .8 41 9.500h185','#8a8886'),1.200)}
<div class="g">${VI.map((v,i)=>`<div class="${i==15?'s':''}">${svg(23,23,'0 0 69 69',v,3,'overflow:visible')}</div>`).join('')}</div>
<div class="f"><div class="col">
<field-well label="Legend" lw="48" chip="Course" cw="46"></field-well>
<field-well label="Values" lw="42" chip="Count of StudentId" cw="126" style="margin-top:13px"></field-well>
<field-well label="Details" lw="45" style="margin-top:14px"></field-well>
<field-well label="Tooltips" lw="51" style="margin-top:13px"></field-well>
<div class="x" style="font-weight:600;color:#484644;margin-top:13px">${t('Drill through',87)}</div>
<div class="x" style="margin-top:11px">${t('Cross-report',83)}<div class="tg"><i></i>${t('Off',16)}</div></div></div><div class="sb"></div></div>`);

define('data-row',`:host{display:flex;height:30px;align-items:center;padding-left:13px;font-size:14.500px;color:#484644}`,
e=>svg(8,15,'0 0 8 15',p('M.7.7l6.500 6.800-6.500 6.800',G),1.100)+svg(24,26,'0 0 24 26',`<rect x="1" y="4.500" width="14" height="14" rx="3" stroke="${K}"/>`+p('M1 9h14M1 14h14M5.500 4.500v14M10.500 4.500v14')+(e.hasAttribute('used')?c(15.500,20,7.500,'#117865','none')+p('M12.500 20l2 2 4-4','#fff','none',1.600):''),1.300,'margin-left:8px;margin-top:3px;overflow:visible')+t(a(e,'name'),a(e,'w'),'margin-left:-1px'));
define('data-pane',`:host{width:226px;height:790px;background:#f3f2f1}
.h{display:flex;padding:10px 10px 0 11px;height:57px;line-height:30px;font-size:19px;font-weight:600;justify-content:space-between}
.s{margin:0 5px 11px 6px;height:33px;border:1px solid #797775;border-radius:2px;display:flex;align-items:center;padding-left:9px;font-size:17px;color:#605e5c;line-height:31px}`,
`<div class="h">${t('Data',41)}<div style="padding-top:7px">${dbl(1)}</div></div><div class="s">${svg(19,19,'0 0 19 19',c(12,7,6,'none',G)+p('M7.500 11.500L.7 18.300',G),1.200)}${t('Search',51,'margin-left:7px;margin-top:1px')}</div>
<data-row name="Course" w="46" used></data-row><data-row name="Enrollments" w="78" used></data-row><data-row name="Students" w="57"></data-row>`);

/* ---------- footer ---------- */
define('page-tabs',`:host{height:44px;background:#f3f2f1;display:flex}
.p{margin-left:8px;width:95px;height:44px;background:#fff;border-left:1px solid #a19f9d;border-bottom:5px solid #117865;display:flex;justify-content:center;line-height:43px;font-size:14.500px;font-weight:600}
.add{width:49px;height:40px;margin-top:2px;background:#117865;display:flex;align-items:center;justify-content:center}
.d{margin-left:13px;width:30px;border-bottom:4px solid #117865;border-radius:2px;height:39px;padding:8px 0 0 2px}`,
`<div class="d">${svg(24,19,'0 0 24 19',p('M1 1h22v13H1zM12 14v4M7 18h10','#605e5c'),1.600)}</div>${svg(17,26,'0 0 17 26',`<rect x="1" y="1" width="15" height="24" rx="1" stroke="#605e5c"/>`+p('M7.500 22h2','#605e5c'),1.700,'margin:5px 0 0 31px')}
${svg(6,12,'0 0 6 12',p('M6 0v12L0 6z','none','#c8c6c4'),1,'margin:15px 0 0 26px')}${svg(6,12,'0 0 6 12',p('M0 0v12l6-6z','none','#c8c6c4'),1,'margin:15px 0 0 22px')}
<div class="p">${t('Page 1',44)}</div><div class="add">${svg(14,14,'0 0 14 14',p('M7 0v14M0 7h14','#fff'),3.500)}</div>`);
define('status-bar',`:host{height:29px;background:#f3f2f1;border-top:1px solid #e1dfdd;display:flex;align-items:center;color:#484644;font-size:15px;padding-top:2px}`,
t('Page 1 of 1',73,'margin-left:5px')+
svg(155,18,'0 0 155 18',p('M1 8h6M145 8h9M149.500 3.500v9','#484644','none',1.800)+p('M12 8.500h125M74.500 5v8','#484644')+r(59.5,2,5,13,'#484644','none'),1,'margin-left:1336px;margin-top:-1px')+
t('82%',28,'margin-left:16px;font-size:14.500px;margin-top:-3px;color:#605e5c')+
svg(21,16,'0 0 21 16',r(1,1,19,14,'none','#605e5c',1.800)+p('M4 6V4h3M14 4h3v2M4 10v2h3M14 12h3v-2','#605e5c'),1.300,'margin-left:24px;margin-top:-1px')+
t('Update available (click to download)',240,'margin-left:17px'));

const TI={
win:'<defs><linearGradient id="w" x2="1" y2="1"><stop stop-color="#4fd0ff"/><stop offset="1" stop-color="#0067c0"/></linearGradient></defs><path fill="url(#w)" d="M2 2h13.500v13.500H2zM16.500 2H30v13.500H16.500zM2 16.500h13.500V30H2zM16.500 16.500H30V30H16.500z"/>',
store:'<path d="M10 8V2.500h12V8" stroke="#29b6f6" stroke-width="1.800"/><path d="M2 7h28v20q0 3-3 3H5q-3 0-3-3z" fill="#155a9e"/><path d="M2 18h28v9q0 3-3 3H5q-3 0-3-3z" fill="#203f72"/><path d="M11 12.500h5v5h-5z" fill="#f25022"/><path d="M17 12.500h5v5h-5z" fill="#7fba00"/><path d="M11 18.500h5v5h-5z" fill="#00a4ef"/><path d="M17 18.500h5v5h-5z" fill="#ffb900"/>',
chrome:'<circle cx="16" cy="16" r="15" fill="#ffcd40"/><path d="M16 16L3 8.500A15 15 0 0 1 29 8.500H16z" fill="#ea4335"/><path d="M3 8.500A15 15 0 0 0 15 31L22.500 19.500 16 16 9.500 19.500z" fill="#2da94f"/><circle cx="16" cy="16" r="7" fill="#fff"/><circle cx="16" cy="16" r="5.500" fill="#3b7ded"/>',
pbi:'<rect x="17" y="1" width="10" height="30" rx="1" fill="#d99a10"/><rect x="11" y="8" width="10" height="23" rx="1" fill="#ecc02c"/><rect x="5" y="16" width="10" height="15" rx="1" fill="#f7dc6b"/>',
fire:'<defs><linearGradient id="f" x1="1" x2="0" y2="1"><stop stop-color="#ffe226"/><stop offset=".5" stop-color="#ff7139"/><stop offset="1" stop-color="#e31587"/></linearGradient></defs><path d="M19 1c1 3 4 4 6 7 8 10 2 23-9 23C6 31 0 23 2 14c0-3 2-6 4-8l1 3c3-2 4-2 7-1 0-4 2-6 5-7z" fill="url(#f)"/><circle cx="16.500" cy="17" r="6" fill="#7a45d0"/><path d="M8 12c4-3 6 1 9 1-1 3-5 3-5 6-3 0-5-4-4-7z" fill="#ff9a2e"/>',
wa:'<path d="M16 1.800a14 14 0 0 0-12 21.500L2.500 30l7-1.700A14 14 0 1 0 16 1.800z" fill="#f4fbf6" stroke="#1f8a54" stroke-width="2.500"/><path d="M11 9c-4 4 5 15 11 14 3-1 3-3 2-4l-3-1.500-2 1.500c-3-1-4-3-5-5l1.500-2L14 8.500q-2-.5-3 .5z" fill="#1f8a54"/>',
vs:'<path d="M22 1v8L4.500 23 1 20.500 22 1z" fill="#1b87d3"/><path d="M22 31v-8L4.500 9 1 11.500 22 31z" fill="#0f6db8"/><path d="M22 1l8.500 3.500v23L22 31z" fill="#2ba4f4"/>',
edge:'<circle cx="16" cy="16" r="15" fill="#1478c8"/><path d="M1 15C3-3 30-3 31 14c0 6-6 8-11 6 2-3 1-8-4-9C9 9 3 12 1 15z" fill="#3cc7a8"/><path d="M16 11C9 9 3 12 1 16c2-6 11-8 15-5z" fill="#1e9ad6"/><path d="M16 14c-5 6 0 15 12 11-4 5-10 6-14 5-6-3-8-12 2-16z" fill="#0c4c93"/><path d="M20 20c-2-1-2-3-1-6-4 4-2 10 4 11 4 0 7-3 7-5-3 1-7 2-10 0z" fill="#eee"/>',
note:'<rect x="4.500" y="3" width="23" height="27" rx="1" fill="#4cc2dc"/><path d="M5 29.500h22.500" stroke="#a05028" stroke-width="3"/><path d="M9 10.500h14M9 15.500h14M9 20.500h14" stroke="#126080" stroke-width="1.800"/><path d="M8 1v4M12 1v4M16 1v4M20 1v4M24 1v4" stroke="#1c5a70" stroke-width="1.800"/>',
mysql:'<rect x="2" y="2" width="28" height="28" rx="2" fill="#2d6187" stroke="#7d98aa"/><path d="M6 5c7 0 12 5 14 12 1 3 4 4 6 6l-4 0-1 4c-1-4-4-6-5-7l-2 4C10 18 9 11 6 5zM21 4l2 3 4 2" stroke="#d9e4ec" stroke-width="1.200"/>',
exp:'<path d="M1 4q0-2 2-2h8l3 4h15q2 0 2 2v18q0 2-2 2H3q-2 0-2-2z" fill="#e8a800"/><path d="M1 8h30v19q0 2-2 2H3q-2 0-2-2z" fill="#ffcf48"/><path d="M6 29v-5q0-2 2-2h16q2 0 2 2v5z" fill="#1172c8"/><path d="M9 25h14" stroke="#0b4f94" stroke-width="1.500"/>',
cmd:'<rect x="2" y="4.500" width="28" height="23" fill="#0c0c0c" stroke="#b8bcc0" stroke-width="1.500"/><path d="M2.500 16q14-1 26-8V6h-26z" fill="#444"/><text x="4.500" y="12" font-size="6.500" fill="#eee" font-family="Liberation Mono">C:\\_</text>',
pc:'<defs><linearGradient id="p" x1="0" y1="1" x2="1" y2="0"><stop stop-color="#07c3f2"/><stop offset=".5" stop-color="#21d789"/><stop offset="1" stop-color="#fcf84a"/></linearGradient></defs><path d="M11 2l19-1v12l-6 10-9 8H2V13z" fill="url(#p)"/><path d="M2 13l6-4v14h12l-5 8H2z" fill="#0cc0ee"/><path d="M7 6.500h18v19H7z" fill="#000"/><text x="8.500" y="16" font-size="10" font-weight="700" fill="#fff" textLength="13.500" lengthAdjust="spacingAndGlyphs">PC</text><path d="M9 21.500h7" stroke="#fff" stroke-width="1.300"/>',
set:'<path d="M13 1h6l1.500 4.500 4-1.500 4.500 6-3 4v4l3 4-4.500 6-4-1.500L19 31h-6l-1.500-4.500-4 1.500L3 22l3-4v-4L3 10l4.500-6 4 1.500z" fill="#77808a"/><circle cx="16" cy="16" r="7" fill="#e6eaee"/><circle cx="16" cy="16" r="5" fill="#0f62b0"/>'};
define('task-icon',`:host{width:43px;height:50px;margin-right:12.100px;border-radius:5px;padding-top:9.500px;display:flex;flex-direction:column;align-items:center}:host([app=chrome]){margin-left:1px}:host([active]){background:#fafafa;box-shadow:0 0 1px #bbb}
i{height:4px;border-radius:2px;background:transparent;width:8px;margin-top:3px}:host([open]) i{background:#868686}:host([active]) i{background:#238095;width:20px}`,
e=>svg(32,32,'0 0 32 32',TI[a(e,'app')],1)+'<i></i>');
define('task-bar',`:host{height:61px;background:#eee;border-top:1.500px solid #000;display:flex;align-items:flex-start;font-size:14px;color:#1b1b1b}
.ic{display:flex;margin:5px 0 0 580.500px;width:772.500px}.tray{display:flex;align-items:center;height:58px;margin-left:233px}.c{display:flex;flex-direction:column;line-height:20px}`,
`<div class="ic">${['win','store','chrome:open','pbi:active','fire','wa:open','vs','edge','note','mysql','exp:open','cmd','pc','set:open'].map(s=>{const[n,x]=s.split(':');return `<task-icon app="${n}" ${x||''}></task-icon>`}).join('')}</div>
<div class="tray">${svg(13,8,'0 0 13 8',p('M1 7l5.500-5.500L12 7'),1.500)}
${svg(22,20,'0 0 22 20',p('M5 15C-1 14 0 7 5 7c1-6 10-6 11-1 5 0 6 8 1 9z',K,'#9c9c9c')+c(16,14,5.500,'#d13438','none')+p('M14 12l4 4M18 12l-4 4','#fff'),1.300,'margin-left:23px')}
<div class="c" style="align-items:center;margin-left:22px;padding-top:2px">${t('ENG',30)}${t('IN',15)}</div>
${svg(21,17,'0 0 21 17',p('M1 6c5-6 14-6 19 0M4 9c4-4.500 9-4.500 13 0M7 12c2-2.500 5-2.500 7 0')+c(10.500,14.500,1.500,K,'none'),1.500,'margin-left:21px')}
${svg(21,18,'0 0 21 18',p('M1 6h3.500L9 2v14l-4.500-4H1zM12 6c1.500 1.500 1.500 4.500 0 6M14.500 4c3 3 3 7 0 10M17 2c4 4 4 10 0 14'),1.300,'margin-left:9px')}
${svg(22,20,'0 0 22 20',`<rect x="3" y="4" width="16" height="10" rx="2.500" fill="#eee" stroke="${K}"/><rect x="8" y="6" width="9" height="6" fill="${K}"/>`+p('M20.500 7.500v3',K,'none',2)+p('M1 9h8v3c0 4-8 4-8 0zM3 6v3M7 6v3M5 15v4',K,'#eee')+p('M14 1l-4 8h4l-2 7 6-9h-4z','#eee',K,1),1.400,'margin-left:9px')}
<div class="c" style="align-items:flex-end;margin-left:19px;padding-top:1px">${t('09:48',36)}${t('11-04-2025',77)}</div></div>`);

fits.forEach(f=>f.fit());
</script>
</body>
</html>
